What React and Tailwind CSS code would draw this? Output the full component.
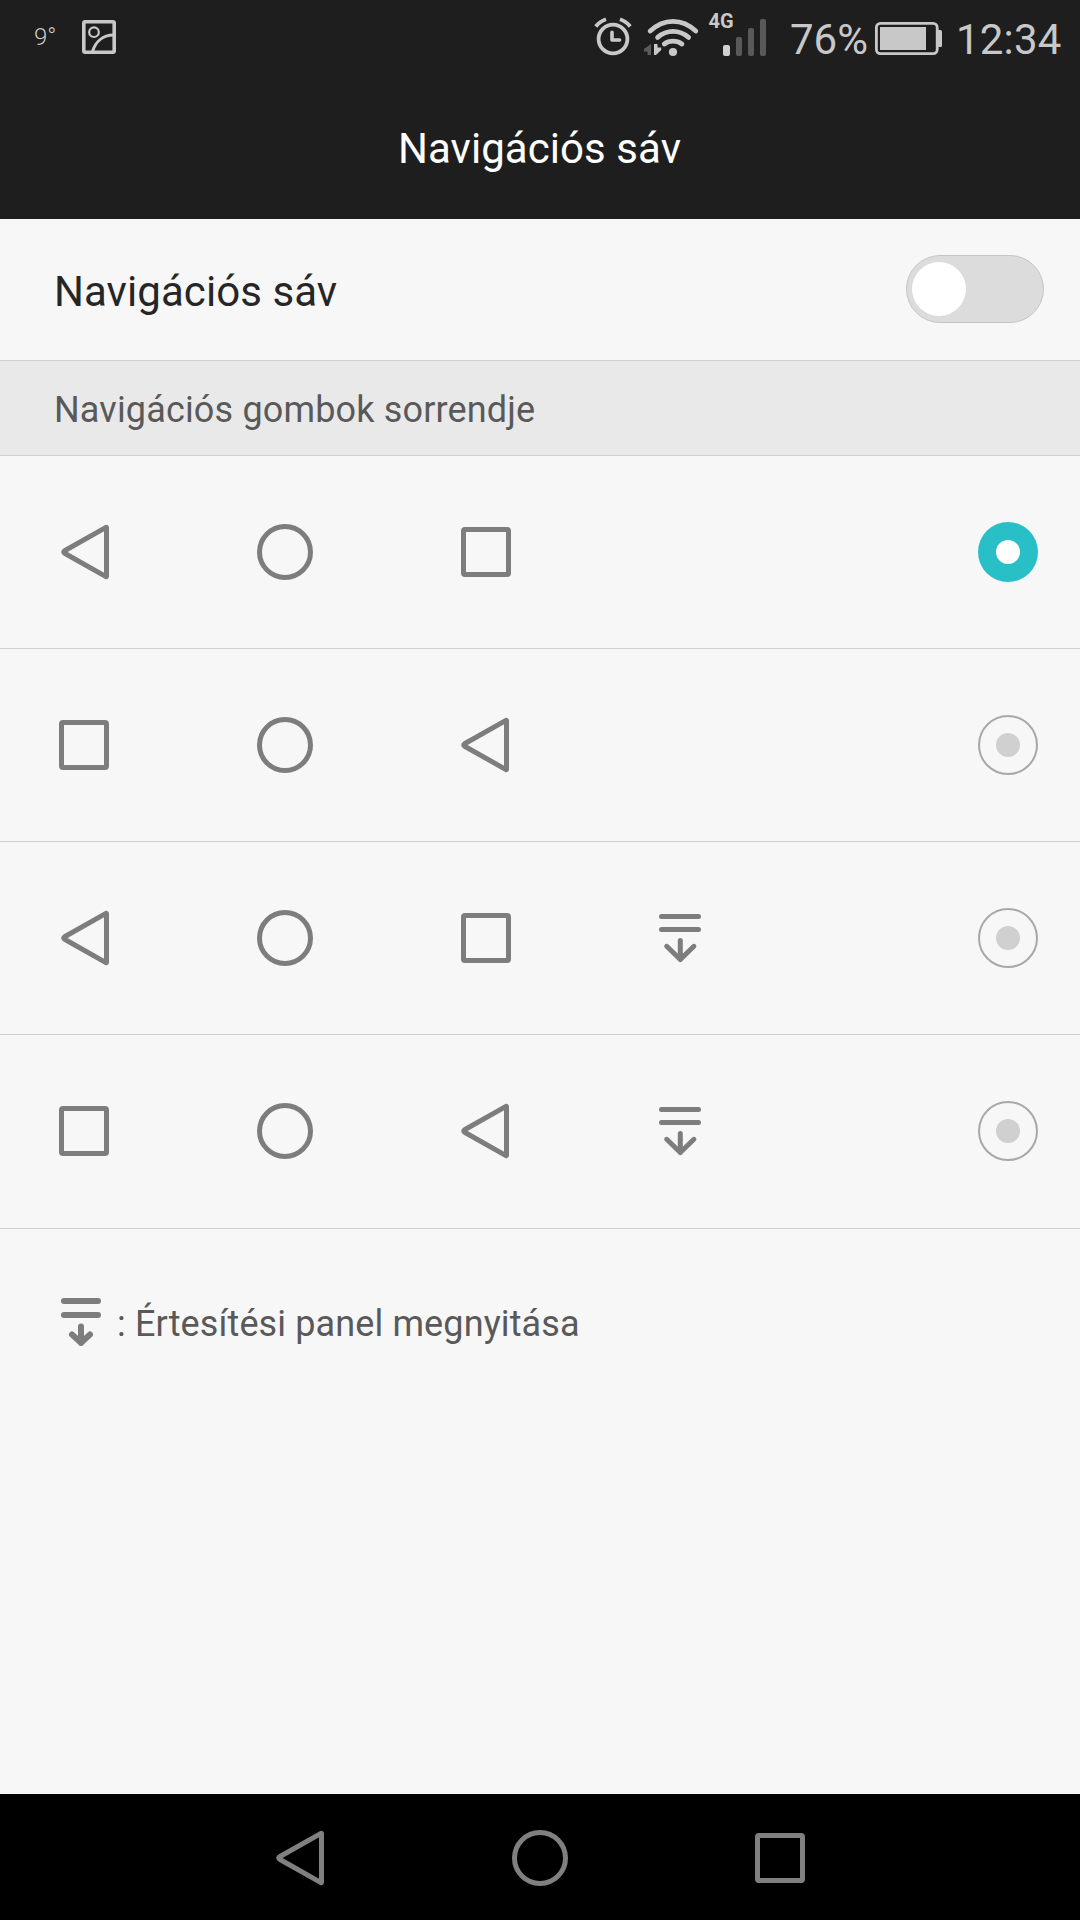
/**
 * Navigation bar settings screen
 * Lets the user toggle the nav bar and pick the order of its buttons.
 */

import { useState } from 'react';

const LAYOUTS = [
  { id: 'back-first', keys: ['back', 'home', 'recent'] },
  { id: 'recent-first', keys: ['recent', 'home', 'back'] },
  { id: 'back-first-panel', keys: ['back', 'home', 'recent', 'panel'] },
  { id: 'recent-first-panel', keys: ['recent', 'home', 'back', 'panel'] },
];

function BackIcon() {
  return (
    <svg className="w-[60px] h-[60px]" viewBox="0 0 60 60" fill="none" stroke="currentColor" strokeWidth="5" strokeLinejoin="round">
      <path d="M51.5 5.6V54.4Q51.5 54.8 51 54.6L9.6 31.2Q7.8 30 9.6 28.8L51 5.4Q51.5 5.2 51.5 5.6Z" />
    </svg>
  );
}

function HomeIcon() {
  return (
    <svg className="w-[60px] h-[60px]" viewBox="0 0 60 60" fill="none" stroke="currentColor" strokeWidth="5">
      <circle cx="30" cy="30" r="25.5" />
    </svg>
  );
}

function RecentIcon() {
  return (
    <svg className="w-[60px] h-[60px]" viewBox="0 0 60 60" fill="none" stroke="currentColor" strokeWidth="5" strokeLinejoin="round">
      <rect x="7.5" y="7.5" width="45" height="45" rx="1.5" />
    </svg>
  );
}

function PanelIcon() {
  return (
    <svg className="w-[60px] h-[60px]" viewBox="0 0 60 60" fill="none" stroke="currentColor" strokeWidth="5" strokeLinecap="round" strokeLinejoin="round">
      <path d="M11.5 8.5h37M11.5 21.5h37M30.3 32.5v19M16.7 38.3l13.6 13.2 13.6-13.2" />
    </svg>
  );
}

const ICONS = { back: BackIcon, home: HomeIcon, recent: RecentIcon, panel: PanelIcon };

function StatusBar() {
  return (
    <div className="h-[78px] flex items-start text-[#c8c8c8]">
      <span className="ml-[34px] mt-[23px] text-[24px] leading-[28px] font-light w-[20px]">9°</span>

      {/* Screenshot notification */}
      <svg className="ml-[28px] mt-5 w-[34px] h-[34px]" viewBox="0 0 34 34" fill="none" stroke="currentColor">
        <rect x="1.8" y="1.8" width="30.4" height="30.4" rx="1.5" strokeWidth="3.6" />
        <circle cx="12" cy="12.2" r="4.8" strokeWidth="2.2" />
        <path d="M10.5 31.5C13.5 21.5 21 15.2 31.5 15" strokeWidth="3" />
      </svg>

      {/* Alarm */}
      <svg className="ml-auto w-[38px] h-[58px]" viewBox="594 0 38 58" fill="none" stroke="currentColor">
        <circle cx="613" cy="39" r="14.4" strokeWidth="3.8" />
        <path d="M612 32.2v7.8h7.6" strokeWidth="3.6" strokeLinecap="round" strokeLinejoin="round" />
        <path d="M595.8 26.5Q599.5 21.5 606 19.2M630.2 26.5Q626.5 21.5 620 19.2" strokeWidth="3.8" />
      </svg>

      {/* Wifi with traffic arrows */}
      <svg className="ml-[11px] w-[57px] h-[58px]" viewBox="643 0 57 58" fill="none" stroke="currentColor">
        <path d="M650.2 31Q660.5 21.3 673 21.3T695.8 31M657.6 37.4Q664.5 31.4 673 31.4T688.6 37.4M664.3 44Q668 41.2 673 41.2T681.9 44" strokeWidth="4.8" strokeLinecap="round" />
        <circle cx="673" cy="52" r="4.1" fill="currentColor" stroke="none" />
        <path d="M651 44v11h-3.4v-3.5H644v-2.5z" fill="#5c5c5c" stroke="none" />
        <path d="M654 44h3.5v3.5h3.7v2.5L656 55h-2z" fill="currentColor" stroke="none" />
      </svg>

      {/* Signal */}
      <div className="ml-[8px] w-[60px] relative h-[58px]">
        <span className="absolute left-[0.5px] top-[9px] text-[20px] leading-[24px] font-bold">4G</span>
        <div className="h-[56px] pl-[15px] flex items-end gap-[6px]">
          <span className="w-[7px] h-[11px] rounded-[2px] bg-[#d0d0d0]" />
          <span className="w-[6px] h-[19px] rounded-[2px] bg-[#595959]" />
          <span className="w-[6px] h-[28px] rounded-[2px] bg-[#595959]" />
          <span className="w-[6px] h-[37px] rounded-[2px] bg-[#595959]" />
        </div>
      </div>

      <span className="ml-[22px] mt-[15px] w-[77px] text-[42px] leading-[49px]">76%</span>

      {/* Battery */}
      <svg className="ml-[8px] mt-[22px] w-[67px] h-[33px]" viewBox="0 0 67 33">
        <rect x="1.4" y="1.4" width="60.8" height="30.2" rx="4" fill="none" stroke="currentColor" strokeWidth="2.8" />
        <rect x="5" y="5" width="46" height="23" fill="currentColor" />
        <path d="M63 8h2.5q1.5 0 1.5 1.5v14q0 1.5-1.5 1.5H63z" fill="currentColor" />
      </svg>

      <span className="ml-[14px] mt-[15px] w-[124px] text-[42px] leading-[49px] tracking-[0.2px]">12:34</span>
    </div>
  );
}

function Radio({ checked }) {
  return checked ? (
    <span className="w-[60px] h-[60px] rounded-full bg-[#29bfc7] flex items-center justify-center">
      <span className="w-6 h-6 rounded-full bg-white" />
    </span>
  ) : (
    <span className="w-[60px] h-[60px] rounded-full border-2 border-[#a8a8a8] flex items-center justify-center">
      <span className="w-6 h-6 rounded-full bg-[#d0d0d0]" />
    </span>
  );
}

function LayoutRow({ keys, checked, onSelect }) {
  return (
    <button
      onClick={onSelect}
      role="radio"
      aria-checked={checked}
      className="w-full h-[193px] last:h-[194px] last:pb-px pl-[54px] pr-[42px] flex items-center justify-between border-b border-[#cfcfcf]"
    >
      <span className="grid grid-cols-[201px_201px_194px_60px] text-[#7d7d7d]">
        {keys.map((key) => {
          const Icon = ICONS[key];
          return (
            <span key={key} className={key === 'back' ? 'first:ml-px not-first:-ml-px' : ''}>
              <Icon />
            </span>
          );
        })}
      </span>
      <Radio checked={checked} />
    </button>
  );
}

export default function App() {
  const [enabled, setEnabled] = useState(false);
  const [selected, setSelected] = useState('back-first');

  return (
    <div className="w-[1080px] h-[1920px] flex flex-col overflow-hidden bg-[#f7f7f7] font-['Roboto',sans-serif]">
      <header className="h-[219px] shrink-0 bg-[#1e1e1e]">
        <StatusBar />
        <h1 className="h-[141px] pr-px text-center text-[42px] leading-[141px] tracking-[0.06px] text-white">Navigációs sáv</h1>
      </header>

      <main className="flex-1">
        <div className="h-[142px] pl-[54px] pr-9 flex items-center justify-between border-b border-[#cfcfcf]">
          <span className="pt-1 text-[42px] leading-[50px] tracking-[0.06px] text-[#262626]">Navigációs sáv</span>
          <button
            onClick={() => setEnabled(!enabled)}
            role="switch"
            aria-checked={enabled}
            className={`w-[138px] h-[68px] mb-[2px] px-[5px] flex items-center rounded-full border border-[#c6c6c6] ${enabled ? 'justify-end bg-[#29bfc7]' : 'bg-[#dcdcdc]'}`}
          >
            <span className="w-[54px] h-[54px] rounded-full bg-white" />
          </button>
        </div>

        <h2 className="h-[95px] pl-[54px] pt-[3px] text-[36px] leading-[93px] tracking-[0.16px] text-[#595959] bg-[#e9e9e9] border-b border-[#cfcfcf]">
          Navigációs gombok sorrendje
        </h2>

        <div role="radiogroup">
          {LAYOUTS.map((layout) => (
            <LayoutRow
              key={layout.id}
              keys={layout.keys}
              checked={selected === layout.id}
              onSelect={() => setSelected(layout.id)}
            />
          ))}
        </div>

        {/* Legend */}
        <div className="pt-[68px] pl-[61px] flex items-start text-[#7d7d7d]">
          <svg className="w-10 h-[50px]" viewBox="0 0 40 50" fill="none" stroke="currentColor" strokeWidth="6" strokeLinecap="round" strokeLinejoin="round">
            <path d="M3 4h34M3 18h34M20 29.5V46M11 37.5l9 8.2 9-8.2" />
          </svg>
          <p className="ml-[16px] mt-[5px] text-[36px] leading-[44px] tracking-[0.12px] text-[#595959]">: Értesítési panel megnyitása</p>
        </div>
      </main>

      <nav className="h-[126px] shrink-0 pt-[2px] bg-black text-[#808080] flex items-center justify-center gap-[180px]">
        <BackIcon />
        <HomeIcon />
        <RecentIcon />
      </nav>
    </div>
  );
}
